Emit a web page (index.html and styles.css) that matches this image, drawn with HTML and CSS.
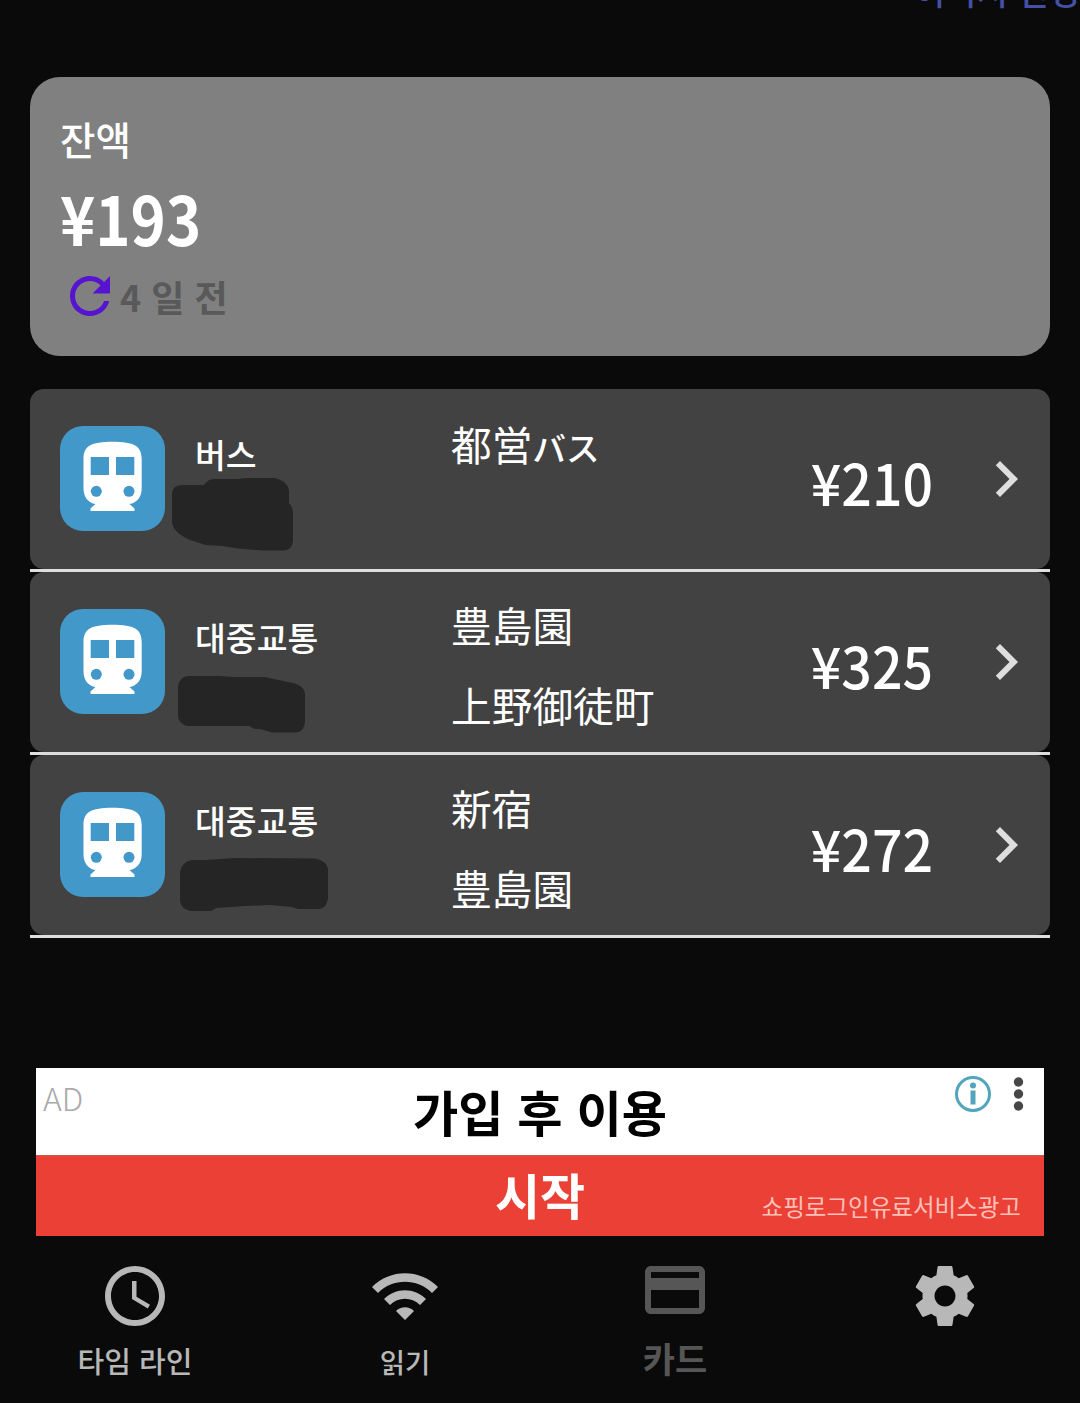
FILE: index.html
```html
<!DOCTYPE html>
<html lang="ko">
<head>
<meta charset="utf-8">
<title>잔액</title>
<link rel="stylesheet" href="styles.css">
</head>
<body>
<svg width="0" height="0" class="defs" aria-hidden="true">
  <symbol id="train" viewBox="0 0 105 105">
    <path fill="#fff" d="M23.500 33C23.500 20 31 15.700 52.500 15.700S81.700 20 81.700 33V62C81.700 71 77 77 69.500 78L74.500 82.500V85H30.500V82.500L35.500 78C28 77 23.500 71 23.500 62Z"/>
    <path fill="#4298c8" d="M30.700 31H49V49H30.700ZM56 31H74.300V49H56Z"/>
    <circle cx="36.300" cy="65.300" r="5.500" fill="#4298c8"/><circle cx="69" cy="65.300" r="5.500" fill="#4298c8"/>
  </symbol>
  <symbol id="chevron" viewBox="0 0 24 24"><path fill="#dedede" d="M10 6 8.590 7.410 13.170 12l-4.580 4.590L10 18l6-6z"/></symbol>
</svg>
<main class="screen">
  <header class="top"><a class="top-link">이미지 변경</a></header>

  <section class="balance">
    <div class="balance-label">잔액</div>
    <div class="balance-amount">¥193</div>
    <div class="updated">
      <svg class="refresh" viewBox="0 0 24 24"><path d="M17.650 6.350C16.200 4.900 14.210 4 12 4c-4.420 0-7.990 3.580-7.990 8s3.570 8 7.990 8c3.730 0 6.840-2.550 7.730-6h-2.080c-.82 2.330-3.040 4-5.650 4-3.310 0-6-2.690-6-6s2.690-6 6-6c1.660 0 3.140.69 4.220 1.780L13 11h7V4l-2.350 2.350z"/></svg>
      <span class="updated-text">4 일 전</span>
    </div>
  </section>

  <section class="history">
    <article class="row">
      <svg class="badge"><use href="#train"/></svg>
      <div class="kind">버스</div>
      <div class="stops stops-single"><span>都営<span class="kana">バス</span></span></div>
      <div class="price">¥210</div>
      <svg class="chevron"><use href="#chevron"/></svg>
      <svg class="scribble" viewBox="0 0 340 180"><path d="M142 106Q142 96 152 96H174Q178 90 184 90H208Q215 88.500 225 89H245Q259 93 259 103V114Q263 118 263 124V152Q262 161 254 161.500H232L208 159.500 192 157 176 156 160 151Q142 143 142 132Z"/></svg>
    </article>
    <article class="row">
      <svg class="badge"><use href="#train"/></svg>
      <div class="kind">대중교통</div>
      <div class="stops"><span>豊島園</span><span>上野御徒町</span></div>
      <div class="price">¥325</div>
      <svg class="chevron"><use href="#chevron"/></svg>
      <svg class="scribble" viewBox="0 0 340 180"><path d="M148 115Q149 105 158 104H190L203 105H235L246 107.500 258 110Q274 112 275 122V150Q274 160 266 160.500H242L230 157H225L219 154H158Q148 152 148 143Z"/></svg>
    </article>
    <article class="row">
      <svg class="badge"><use href="#train"/></svg>
      <div class="kind">대중교통</div>
      <div class="stops"><span>新宿</span><span>豊島園</span></div>
      <div class="price">¥272</div>
      <svg class="chevron"><use href="#chevron"/></svg>
      <svg class="scribble" viewBox="0 0 340 180"><path d="M150 118Q151 107 162 105H175L205 103 285 103.500Q298 106 298 116V143Q297 153 289 154H268L262 152 240 150 215 151 186 153Q182 156 180 156H160Q150 153 150 145Z"/></svg>
    </article>
  </section>

  <aside class="ad">
    <div class="ad-head">
      <span class="ad-mark">AD</span>
      <span class="ad-title">가입 후 이용</span>
      <svg class="ad-icons" viewBox="0 0 80 40">
        <circle cx="18" cy="20" r="16.500" fill="none" stroke="#52a5bd" stroke-width="3"/>
        <circle cx="18" cy="11.500" r="3" fill="#52a5bd"/><path fill="#52a5bd" d="M15.500 16.500h5v14h-5z"/>
        <g fill="#474747"><circle cx="63.500" cy="8" r="4.700"/><circle cx="63.500" cy="20" r="4.700"/><circle cx="63.500" cy="32" r="4.700"/></g>
      </svg>
    </div>
    <div class="ad-action">
      <span></span>
      <span class="ad-start">시작</span>
      <span class="ad-note">쇼핑로그인유료서비스광고</span>
    </div>
  </aside>

  <nav class="tabs">
    <a class="tab">
      <svg viewBox="0 0 24 24"><path d="M11.990 2C6.470 2 2 6.480 2 12s4.470 10 9.990 10C17.520 22 22 17.520 22 12S17.520 2 11.990 2zM12 20c-4.420 0-8-3.580-8-8s3.580-8 8-8 8 3.580 8 8-3.580 8-8 8zm.5-13H11v6l5.250 3.150.75-1.230-4.500-2.670z"/></svg>
      <span class="tab-name">타임 라인</span>
    </a>
    <a class="tab">
      <svg viewBox="0 0 24 24"><path d="M1 9l2 2c4.970-4.970 13.030-4.970 18 0l2-2C16.930 2.930 7.080 2.930 1 9zm8 8l3 3 3-3c-1.650-1.660-4.340-1.660-6 0zm-4-4l2 2c2.760-2.760 7.240-2.760 10 0l2-2C15.140 9.140 8.870 9.140 5 13z"/></svg>
      <span class="tab-name tab-read">읽기</span>
    </a>
    <a class="tab tab-current">
      <svg viewBox="0 0 24 24"><path d="M20 4H4c-1.110 0-1.990.89-1.990 2L2 18c0 1.110.89 2 2 2h16c1.110 0 2-.89 2-2V6c0-1.110-.89-2-2-2zm0 14H4v-6h16v6zm0-10H4V6h16v2z"/></svg>
      <span class="tab-name">카드</span>
    </a>
    <a class="tab">
      <svg viewBox="0 0 24 24"><path d="M19.430 12.980c.04-.32.070-.64.070-.98s-.03-.66-.07-.98l2.110-1.650c.19-.15.24-.42.120-.64l-2-3.460c-.12-.22-.39-.3-.61-.22l-2.490 1c-.52-.4-1.080-.73-1.690-.98l-.38-2.650C14.460 2.180 14.250 2 14 2h-4c-.25 0-.46.180-.49.420l-.38 2.650c-.61.250-1.170.590-1.690.980l-2.490-1c-.23-.09-.49 0-.61.220l-2 3.460c-.13.220-.07.490.120.640l2.110 1.650c-.04.320-.07.650-.07.980s.03.660.070.980l-2.110 1.650c-.19.150-.24.420-.12.640l2 3.460c.12.220.390.300.610.220l2.490-1c.52.400 1.080.730 1.690.980l.38 2.650c.03.240.240.420.490.420h4c.25 0 .46-.18.490-.42l.38-2.650c.61-.25 1.170-.59 1.690-.98l2.490 1c.23.090.490 0 .61-.22l2-3.460c.12-.22.070-.49-.12-.64l-2.110-1.650zM12 15.500c-1.930 0-3.500-1.570-3.500-3.500s1.570-3.500 3.500-3.500 3.500 1.570 3.500 3.500-1.570 3.500-3.500 3.500z"/></svg>
    </a>
  </nav>
</main>
</body>
</html>
```
FILE: styles.css
```css
* { box-sizing: border-box; }
body {
  margin: 0;
  background: #0a0a0a;
  color: #fff;
  font-family: "Noto Sans CJK KR", sans-serif;
}
svg { display: block; flex: none; }
.defs { position: absolute; }
.screen {
  width: 1080px;
  height: 1403px;
  display: flex;
  flex-direction: column;
  overflow: hidden;
}

.top { height: 77px; display: flex; justify-content: flex-end; }
.top-link {
  margin-top: -34px;
  height: 50px;
  line-height: 50px;
  font-size: 34px;
  font-weight: 500;
  color: #4550a5;
  white-space: nowrap;
}

.balance {
  height: 279px;
  margin: 0 30px;
  padding: 38px 30px 0;
  border-radius: 30px;
  background: #808080;
}
.balance-label { height: 46px; line-height: 47px; font-size: 38.500px; font-weight: 500; }
.balance-amount {
  height: 105px;
  line-height: 112px;
  font-size: 68px;
  font-weight: 700;
  transform: scaleX(.88);
  transform-origin: left;
}
.updated { height: 60px; display: flex; align-items: center; }
.refresh { width: 60px; height: 60px; fill: #5714d0; }
.updated-text { font-size: 36px; line-height: 60px; font-weight: 700; color: #595959; }

.history { margin: 33px 30px 0; }
.row {
  position: relative;
  height: 183px;
  display: grid;
  grid-template-columns: 105px 256px 280px 1fr 72px;
  padding: 0 8px 3px 30px;
  column-gap: 0;
}
.row::before {
  content: "";
  position: absolute;
  inset: 0 0 3px;
  border-radius: 14px;
  background: #424242;
  z-index: -1;
}
.row::after {
  content: "";
  position: absolute;
  inset: auto 0 0;
  height: 3px;
  background: #dedede;
}
.badge { width: 105px; height: 105px; margin-top: 37px; border-radius: 23px; background: #4298c8; }
.kind { padding: 42px 0 0 30px; font-size: 33.500px; line-height: 46px; font-weight: 500; }
.stops {
  display: flex;
  flex-direction: column;
  padding: 13px 0 0 30px;
  font-family: "Noto Sans CJK JP", sans-serif;
  font-size: 40.700px;
  line-height: 80px;
  white-space: nowrap;
}
.stops-single { padding-top: 15px; }
.kana { font-size: 33.500px; font-weight: 500; }
.price {
  padding: 52px 37px 0 0;
  line-height: 80px;
  font-size: 57px;
  font-weight: 500;
  text-align: right;
  transform: scaleX(.94);
  transform-origin: calc(100% - 37px) 50%;
}
.chevron { width: 72px; height: 72px; margin-top: 53.500px; }
.scribble { position: absolute; left: 0; top: 0; width: 340px; height: 180px; fill: #252525; }

.ad { margin: 130px 36px 0; height: 168px; }
.ad-head, .ad-action { display: grid; grid-template-columns: 1fr auto 1fr; }
.ad-head { height: 87px; background: #fff; color: #000; }
.ad-mark {
  padding-left: 7px;
  font-size: 32px;
  line-height: 58px;
  font-weight: 300;
  color: #aaa;
}
.ad-title { font-size: 49.200px; line-height: 86px; font-weight: 700; }
.ad-icons { width: 80px; height: 40px; margin: 6px 9px 0 0; justify-self: end; }
.ad-action { height: 81px; background: #eb4036; border-top: 1px solid #c65b54; }
.ad-start { font-size: 49px; line-height: 76px; font-weight: 700; }
.ad-note { padding-right: 23px; justify-self: end; font-size: 23.500px; line-height: 101px; color: #ffc0b8; }

.tabs { display: grid; grid-template-columns: repeat(4, 1fr); padding-top: 24px; }
.tab { display: flex; flex-direction: column; align-items: center; fill: #b8b8b8; color: #b8b8b8; }
.tab svg { width: 72px; height: 72px; }
.tab-name { margin-top: 8px; font-size: 29px; line-height: 40px; font-weight: 500; }
.tab-read { font-size: 27.500px; line-height: 42px; }
.tab-current { margin-top: -6px; fill: #565656; color: #565656; }
.tab-current .tab-name { margin-top: 12px; font-size: 35px; font-weight: 700; }
```
